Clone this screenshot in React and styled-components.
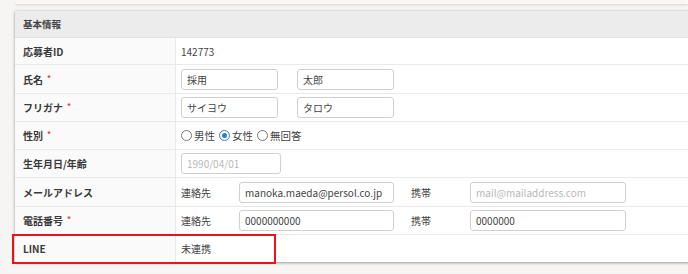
import React from "react";
import styled, { createGlobalStyle } from "styled-components";

const GlobalStyle = createGlobalStyle`
  html, body {
    margin: 0;
    padding: 0;
    background: #f6f5f4;
    overflow: hidden;
  }
  body {
    font-family: "Noto Sans CJK JP", "Noto Sans", sans-serif;
    color: #333;
  }
`;

const Page = styled.div`
  width: 688px;
  height: 274px;
  overflow: hidden;
`;

const PrevCard = styled.div`
  margin-left: 15px;
  height: 4px;
  background: #f9f8f7;
  box-shadow: 0 1px 3px rgba(0, 0, 0, 0.12);
`;

const Card = styled.section`
  margin: 7px 0 0 15px;
  width: 700px;
  background: #fff;
  box-shadow: 0 1px 3px rgba(0, 0, 0, 0.35), 0 0 1px rgba(0, 0, 0, 0.15);
`;

const Header = styled.div`
  height: 26px;
  display: flex;
  align-items: center;
  padding-left: 8px;
  background: #ececec;
  border-bottom: 1px solid #e2e2e2;
  font-size: 9.5px;
  font-weight: 700;
  color: #444;
`;

const Row = styled.div`
  position: relative;
  display: grid;
  grid-template-columns: 161px 1fr;
  height: ${(p) => p.$h}px;
  border-bottom: ${(p) => (p.$last ? "none" : "1px solid #e9e9e9")};
`;

const Label = styled.div`
  display: flex;
  align-items: center;
  padding-left: 8px;
  background: #fafafa;
  border-right: 1px solid #e9e9e9;
  font-size: 10px;
  font-weight: 700;
  color: #3a3a3a;
`;

const Req = styled.span`
  color: #e2373f;
  margin-left: 4px;
  font-size: 8px;
  position: relative;
  top: -2px;
`;

const Value = styled.div`
  display: flex;
  align-items: center;
  padding-left: 5px;
  font-size: 10px;
  color: #444;
`;

const Input = styled.div`
  box-sizing: border-box;
  width: ${(p) => p.$w}px;
  height: 21px;
  border: 1px solid #cfcfcf;
  border-radius: 3px;
  display: flex;
  align-items: center;
  padding-left: 5px;
  margin-right: ${(p) => p.$mr || 0}px;
  font-size: 10px;
  white-space: nowrap;
  overflow: hidden;
  color: ${(p) => (p.$ph ? "#b8b8b8" : "#444")};
  background: #fff;
`;

const SubLabel = styled.span`
  width: ${(p) => p.$w}px;
  font-size: 10px;
  color: #444;
`;

const Radio = styled.label`
  display: flex;
  align-items: center;
  gap: 2px;
  margin-right: 4px;
  font-size: 10.5px;
  color: #444;
`;

const Dot = styled.span`
  box-sizing: border-box;
  width: 11px;
  height: 11px;
  border-radius: 50%;
  border: 1px solid ${(p) => (p.$on ? "#2f7fd1" : "#777")};
  display: flex;
  align-items: center;
  justify-content: center;
  &::after {
    content: "";
    width: 5px;
    height: 5px;
    border-radius: 50%;
    background: ${(p) => (p.$on ? "#2f7fd1" : "transparent")};
  }
`;

const Highlight = styled.div`
  position: absolute;
  left: -3px;
  top: -1px;
  width: 264px;
  height: 30px;
  box-sizing: border-box;
  border: 2px solid #e8141b;
  pointer-events: none;
`;

export default function App() {
  return (
    <Page>
      <GlobalStyle />
      <PrevCard />
      <Card>
        <Header>基本情報</Header>
        <Row $h={26}>
          <Label>応募者ID</Label>
          <Value>142773</Value>
        </Row>
        <Row $h={28}>
          <Label>
            氏名<Req>*</Req>
          </Label>
          <Value>
            <Input $w={97} $mr={19}>採用</Input>
            <Input $w={97}>太郎</Input>
          </Value>
        </Row>
        <Row $h={27}>
          <Label>
            フリガナ<Req>*</Req>
          </Label>
          <Value>
            <Input $w={97} $mr={19}>サイヨウ</Input>
            <Input $w={97}>タロウ</Input>
          </Value>
        </Row>
        <Row $h={27}>
          <Label>
            性別<Req>*</Req>
          </Label>
          <Value>
            <Radio>
              <Dot />男性
            </Radio>
            <Radio>
              <Dot $on />女性
            </Radio>
            <Radio>
              <Dot />無回答
            </Radio>
          </Value>
        </Row>
        <Row $h={27}>
          <Label>生年月日/年齢</Label>
          <Value>
            <Input $w={100} $ph>1990/04/01</Input>
          </Value>
        </Row>
        <Row $h={28}>
          <Label>メールアドレス</Label>
          <Value>
            <SubLabel $w={58}>連絡先</SubLabel>
            <Input $w={155} $mr={17}>manoka.maeda@persol.co.jp</Input>
            <SubLabel $w={59}>携帯</SubLabel>
            <Input $w={156} $ph>mail@mailaddress.com</Input>
          </Value>
        </Row>
        <Row $h={27}>
          <Label>
            電話番号<Req>*</Req>
          </Label>
          <Value>
            <SubLabel $w={58}>連絡先</SubLabel>
            <Input $w={155} $mr={17}>0000000000</Input>
            <SubLabel $w={59}>携帯</SubLabel>
            <Input $w={156}>0000000</Input>
          </Value>
        </Row>
        <Row $h={27} $last>
          <Label>LINE</Label>
          <Value>未連携</Value>
          <Highlight />
        </Row>
      </Card>
    </Page>
  );
}
